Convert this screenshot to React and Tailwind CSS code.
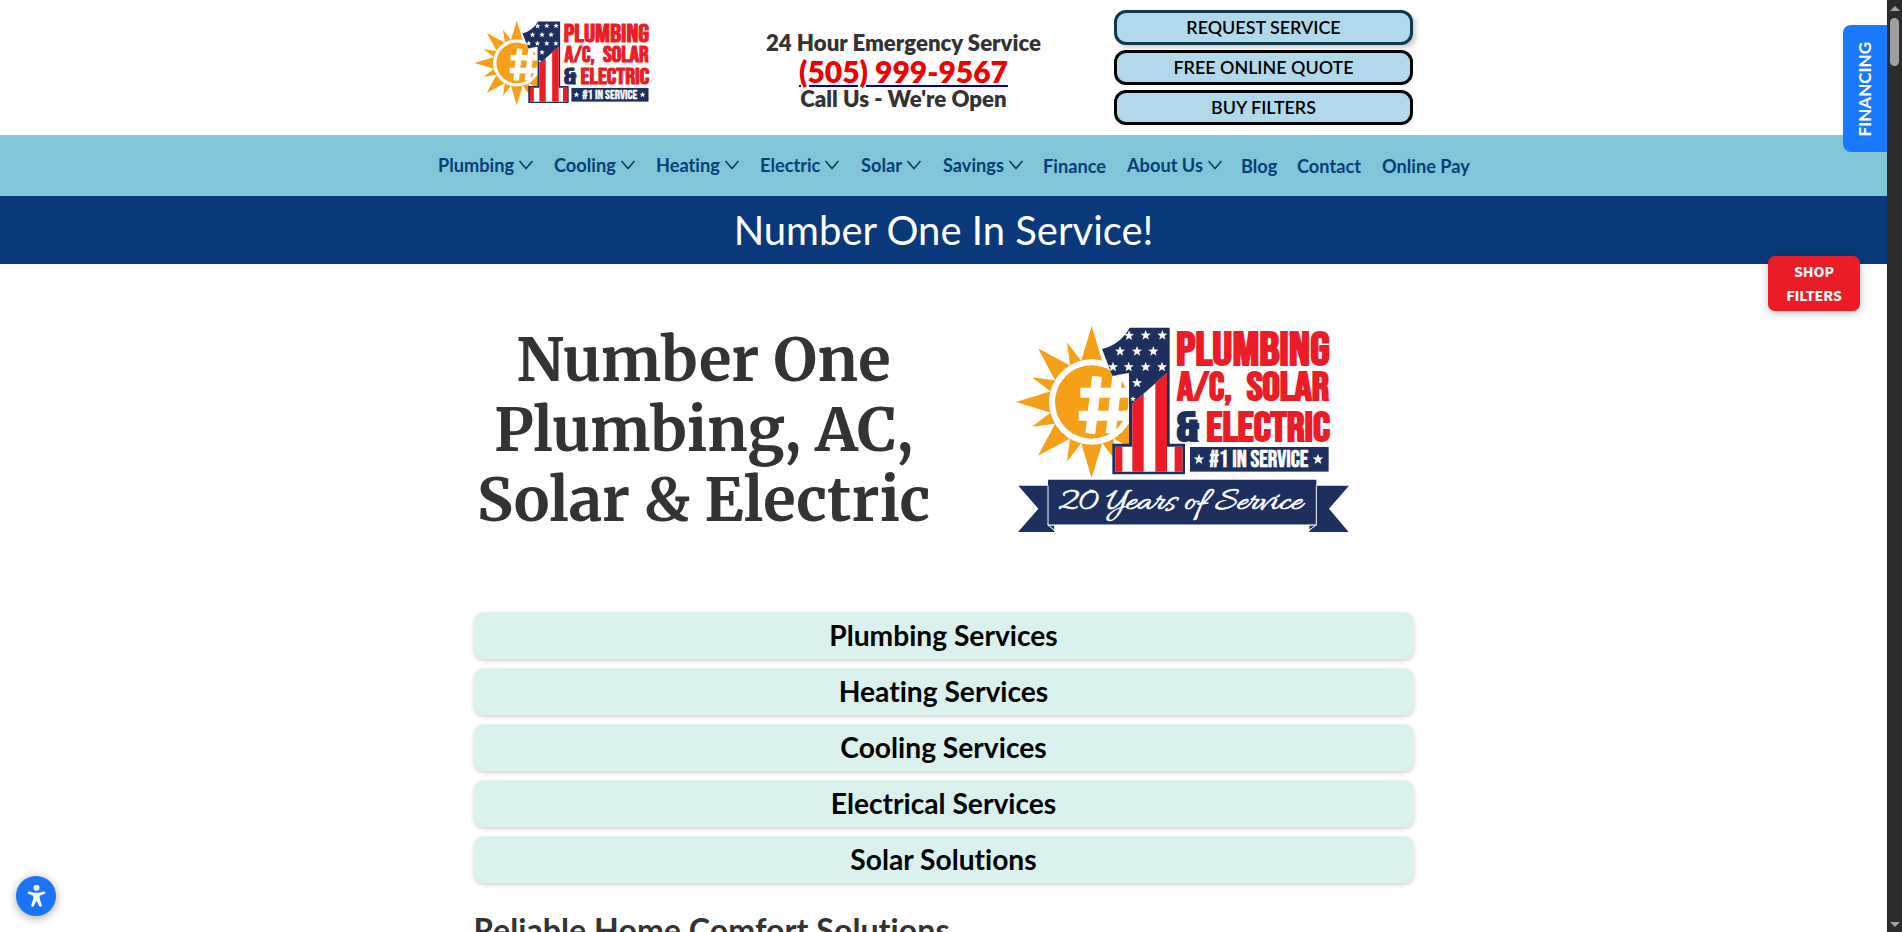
const NAV_ITEMS = [
  { label: "Plumbing", menu: true, width: "w-[116px]" },
  { label: "Cooling", menu: true, width: "w-[102px]" },
  { label: "Heating", menu: true, width: "w-[104px]" },
  { label: "Electric", menu: true, width: "w-[101px]" },
  { label: "Solar", menu: true, width: "w-[82px]" },
  { label: "Savings", menu: true, width: "w-[100px]" },
  { label: "Finance", menu: false, width: "w-[84px]" },
  { label: "About Us", menu: true, width: "w-[114px]" },
  { label: "Blog", menu: false, width: "w-[56px]" },
  { label: "Contact", menu: false, width: "w-[85px]" },
  { label: "Online Pay", menu: false, width: "w-[89px]" },
];

const SERVICES = [
  "Plumbing Services",
  "Heating Services",
  "Cooling Services",
  "Electrical Services",
  "Solar Solutions",
];

const FLAG_STARS = [
  [388, 78], [438, 77], [488, 77],
  [361, 125], [412, 125], [461, 125],
  [340, 172], [387, 172], [438, 172], [487, 172],
  [412, 220], [400, 268],
];

const LONG_RAYS = [-135, -90, -45, 0, 45, 90];
const SHORT_RAYS = [-112.5, -67.5, -22.5, 22.5, 67.5];

function starPoints(cx, cy, r) {
  return Array.from({ length: 10 }, (_, i) => {
    const radius = i % 2 === 0 ? r : r * 0.42;
    const a = (Math.PI / 5) * i - Math.PI / 2;
    return `${(cx + radius * Math.cos(a)).toFixed(1)},${(cy + radius * Math.sin(a)).toFixed(1)}`;
  }).join(" ");
}

function LogoWord({ x, y, width, size, fill, children }) {
  return (
    <text
      x={x}
      y={y}
      fontSize={size}
      textLength={width}
      lengthAdjust="spacingAndGlyphs"
      fill={fill}
      stroke={fill}
      strokeWidth="6"
      className="font-['Bebas_Neue','Open_Sans',sans-serif] font-normal"
    >
      {children}
    </text>
  );
}

function Logo({ id, ribbon = false, className }) {
  const onePath =
    "M390 54H510V402H556V494H338V402H388V190L338 198L307 118Q362 104 390 54Z";
  return (
    <svg
      viewBox={ribbon ? "40 40 1020 640" : "40 40 960 475"}
      className={className}
      role="img"
      aria-label="Number One Plumbing, A/C, Solar and Electric"
    >
      <defs>
        <clipPath id={`${id}-one`}>
          <path d={onePath} />
        </clipPath>
      </defs>

      <g fill="#f6a01a">
        {LONG_RAYS.map((a) => (
          <polygon key={a} points="-228,0 -122,-32 -122,32" transform={`translate(276 277) rotate(${a})`} />
        ))}
        {SHORT_RAYS.map((a) => (
          <polygon key={a} points="-194,0 -122,-19 -122,19" transform={`translate(276 277) rotate(${a})`} />
        ))}
      </g>
      <circle cx="276" cy="277" r="128" fill="#fff" />
      <circle cx="276" cy="277" r="110" fill="#f6a01a" />
      <path
        d="M292 200L272 372M353 200L333 372M242 249H392M237 318H388"
        fill="none"
        stroke="#fff"
        strokeWidth="30"
      />

      <path d={onePath} fill="#1c2f5e" />
      <path d="M347 411H398V282L502 190V411H548V486H347Z" fill="#fff" />
      <path
        d="M347 411H368V486H347ZM398 282L432 252V486H398ZM467 221L502 190V486H467ZM525 411H548V486H525Z"
        fill="#ec1c26"
      />
      <g fill="#fff" clipPath={`url(#${id}-one)`}>
        {FLAG_STARS.map(([x, y], i) => (
          <polygon key={i} points={starPoints(x, y, i === 11 ? 9 : 16)} />
        ))}
      </g>

      <LogoWord x={529} y={165} width={461} size={138} fill="#ec1c26">PLUMBING</LogoWord>
      <LogoWord x={533} y={270} width={163} size={119} fill="#ec1c26">A/C,</LogoWord>
      <LogoWord x={741} y={270} width={247} size={119} fill="#ec1c26">SOLAR</LogoWord>
      <LogoWord x={530} y={393} width={68} size={121} fill="#1c2f5e">&amp;</LogoWord>
      <LogoWord x={620} y={393} width={371} size={123} fill="#ec1c26">ELECTRIC</LogoWord>
      <rect x="571" y="412" width="416" height="74" fill="#1c2f5e" />
      <polygon points={starPoints(598, 449, 17)} fill="#fff" />
      <polygon points={starPoints(955, 449, 17)} fill="#fff" />
      <text
        x="629"
        y="473"
        fontSize="71"
        textLength="297"
        lengthAdjust="spacingAndGlyphs"
        fill="#fff"
        stroke="#fff"
        strokeWidth="2"
        className="font-['Bebas_Neue','Open_Sans',sans-serif] font-normal"
      >
        #1 IN SERVICE
      </text>

      {ribbon && (
        <g>
          <path d="M56 528H150V646L165 667H55L116 597Z" fill="#1c2f5e" />
          <path d="M1048 528H945V646L927 667H1047L988 597Z" fill="#1c2f5e" />
          <path d="M144 646L165 662V646ZM950 646L928 662V646Z" fill="#1c2f5e" stroke="#fff" strokeWidth="3" />
          <path d="M145 510H950V646H145Z" fill="#1c2f5e" />
          <path d="M145 528V646H950V528" fill="none" stroke="#fff" strokeWidth="3" />
          <text
            x="172"
            y="597"
            fontSize="102"
            textLength="736"
            lengthAdjust="spacingAndGlyphs"
            fill="#fff"
            stroke="#fff"
            strokeWidth="2"
            className="font-['Allura','Liberation_Serif',cursive]"
          >
            20 Years of Service
          </text>
        </g>
      )}
    </svg>
  );
}

function Scrollbar() {
  return (
    <div className="flex h-full w-[15px] shrink-0 flex-col items-center justify-between bg-[#2c2c2c] pt-[6px] pb-[5px]">
      <div className="flex flex-col items-center gap-[7px]">
        <svg viewBox="0 0 10 5" className="h-[5px] w-[10px] fill-[#a3a3a3]">
          <path d="M0 5L5 0L10 5Z" />
        </svg>
        <div className="h-[48px] w-[9px] rounded-full bg-[#9f9f9f]" />
      </div>
      <svg viewBox="0 0 10 5" className="h-[5px] w-[10px] fill-[#a3a3a3]">
        <path d="M0 0L5 5L10 0Z" />
      </svg>
    </div>
  );
}

export default function App() {
  return (
    <div className="flex h-[932px] w-[1902px] overflow-hidden bg-white font-['Lato',sans-serif] text-[#333] [font-variant-ligatures:none]">
      <div className="relative h-full w-[1887px] overflow-hidden">
        <header className="flex h-[135px] pl-[473px]">
          <div className="pt-[19px]">
            <Logo id="small" className="h-[88px] w-[178px]" />
          </div>
          <div className="ml-[93px] flex w-[319px] flex-col items-center pt-[29px] text-[22.2px] leading-[27px] font-extrabold">
            <p>24 Hour Emergency Service</p>
            <a
              href="#call"
              className="text-[30px] leading-[31px] text-[#f00000] underline decoration-[#0000a0] decoration-2 underline-offset-[2px]"
            >
              (505) 999-9567
            </a>
            <p className="leading-[23px]">Call Us - We're Open</p>
          </div>
          <div className="ml-[51px] flex w-[299px] flex-col gap-[5px] pt-[10px] text-[17.9px] leading-none font-semibold text-black">
            <button className="h-[35px] rounded-[12px] border-3 border-[#0a3a4c] bg-[#b0daeb] pt-px shadow-[3px_3px_5px_rgba(0,0,0,0.2)]">
              REQUEST SERVICE
            </button>
            <button className="h-[35px] rounded-[12px] border-3 border-black bg-[#b0daeb] pt-px">
              FREE ONLINE QUOTE
            </button>
            <button className="h-[35px] rounded-[12px] border-3 border-black bg-[#b0daeb] pt-px">BUY FILTERS</button>
          </div>
        </header>

        <nav className="flex h-[61px] items-center bg-[#80c6d8] pl-[438px] text-[18.2px] font-bold text-[#073e75]">
          {NAV_ITEMS.map(({ label, menu, width }) => (
            <a
              key={label}
              href="#nav"
              className={`${width} flex shrink-0 items-center gap-[4px] whitespace-nowrap ${menu ? "" : "pt-[2px]"}`}
            >
              {label}
              {menu && (
                <svg viewBox="0 0 16 10" className="h-[10px] w-[16px] fill-none stroke-[#123a5c] stroke-[1.6]">
                  <path d="M1.5 1L8 8.5L14.5 1" />
                </svg>
              )}
            </a>
          ))}
        </nav>

        <div className="flex h-[68px] items-center justify-center bg-[#0a397b] text-[40px] text-white">
          Number One In Service!
        </div>

        <main className="mx-auto w-[940px]">
          <section className="flex h-[348px]">
            <h1 className="flex w-[460px] flex-col items-center pt-[61px] font-['Merriweather','DejaVu_Serif_Condensed','DejaVu_Serif',serif] text-[60px] leading-[70px] font-bold whitespace-nowrap">
              <span>Number One</span>
              <span>Plumbing, AC,</span>
              <span>Solar &amp; Electric</span>
            </h1>
            <div className="pt-[59px] pl-[79px]">
              <Logo id="hero" ribbon className="h-[213.3px] w-[340px]" />
            </div>
          </section>
          <div className="flex flex-col gap-[9px] text-[28.2px] leading-none font-bold text-black">
            {SERVICES.map((name) => (
              <button
                key={name}
                className="flex h-[47px] items-center justify-center rounded-[10px] bg-[#dbf1ee] shadow-[0_2px_4px_rgba(0,0,0,0.18)]"
              >
                {name}
              </button>
            ))}
          </div>
          <h2 className="mt-[27px] text-[32.2px] leading-[40px] font-bold">Reliable Home Comfort Solutions</h2>
        </main>

        <a
          href="#financing"
          className="absolute top-[25px] right-0 flex h-[127px] w-[44px] items-center justify-center rounded-l-[8px] bg-[#1a7aff] pt-[2px] text-white"
        >
          <span className="rotate-180 text-[17px] font-bold [writing-mode:vertical-rl]">FINANCING</span>
        </a>
        <a
          href="#shop"
          className="absolute top-[256px] right-[27px] flex h-[55px] w-[92px] flex-col items-center justify-center rounded-[7px] bg-[#ec1c26] pt-px font-['Source_Sans_3','Source_Sans_Pro','Noto_Sans',sans-serif] text-[16px] leading-[24px] font-bold text-white shadow-[0_2px_8px_rgba(0,0,0,0.25)]"
        >
          <span>SHOP</span>
          <span>FILTERS</span>
        </a>
        <button
          aria-label="Accessibility"
          className="absolute top-[876px] left-[16px] flex size-[40px] items-center justify-center rounded-full bg-[#1a73f8] shadow-[0_2px_10px_rgba(0,0,0,0.35)]"
        >
          <svg viewBox="0 0 24 30" className="h-[24px] w-[19px] fill-white">
            <circle cx="12" cy="4.5" r="3.8" />
            <path d="M3 9.2L9 11H15L21 9.2Q22.8 9 23.2 10.7Q23.3 12 21.8 12.6L16 14.6V18L18.6 26.4Q18.8 28.2 17.4 28.6Q15.8 28.9 15.2 27.4L12.4 21.5H11.6L8.8 27.4Q8.2 28.9 6.6 28.6Q5.2 28.2 5.4 26.4L8 18V14.6L2.2 12.6Q.7 12 .8 10.7Q1.2 9 3 9.2Z" />
          </svg>
        </button>
      </div>
      <Scrollbar />
    </div>
  );
}
